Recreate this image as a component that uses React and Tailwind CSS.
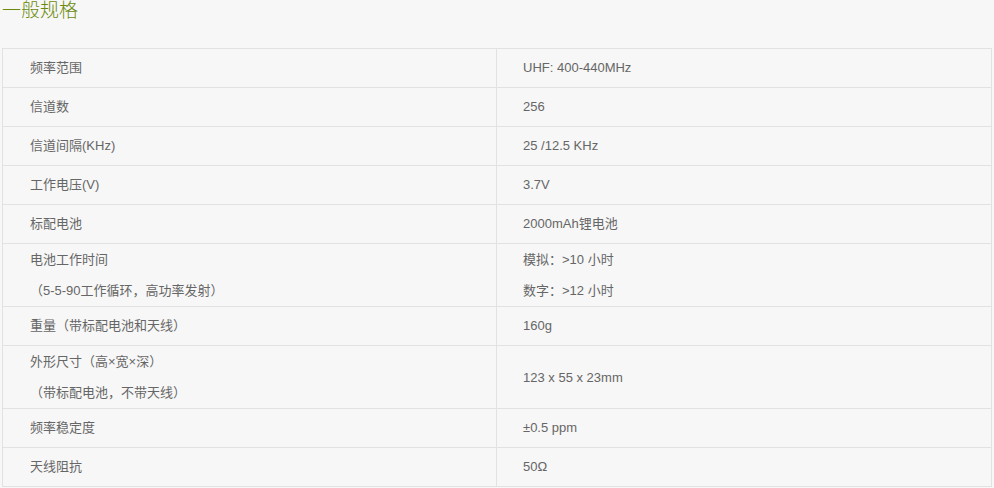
const specs = [
  { label: ['频率范围'], value: ['UHF: 400-440MHz'] },
  { label: ['信道数'], value: ['256'] },
  { label: ['信道间隔(KHz)'], value: ['25 /12.5 KHz'] },
  { label: ['工作电压(V)'], value: ['3.7V'] },
  { label: ['标配电池'], value: ['2000mAh锂电池'] },
  { label: ['电池工作时间', '（5-5-90工作循环，高功率发射）'], value: ['模拟：>10 小时', '数字：>12 小时'] },
  { label: ['重量（带标配电池和天线）'], value: ['160g'] },
  { label: ['外形尺寸（高×宽×深）', '（带标配电池，不带天线）'], value: ['123 x 55 x 23mm'] },
  { label: ['频率稳定度'], value: ['±0.5 ppm'] },
  { label: ['天线阻抗'], value: ['50Ω'] },
];

const Cell = ({ lines, tall, className = '' }) => (
  <div className={`flex flex-col justify-center ${tall ? 'min-h-[62px]' : 'min-h-[38px] pb-[1px]'} ${className}`}>
    {lines.map((line, i) => (
      <p key={i} className="leading-[31px]">
        {line}
      </p>
    ))}
  </div>
);

export default function App() {
  return (
    <div
      className="h-[488px] w-[994px] overflow-hidden bg-[#f7f7f7] text-[13px] text-[#666]"
      style={{ fontFamily: '"Liberation Sans", Arial, "Noto Sans CJK SC", sans-serif' }}
    >
      <h2 className="ml-[2px] h-[48px] text-[19px] font-light leading-[22px] text-[#6b8a0c]">
        一般规格
      </h2>

      {/* 规格表 */}
      <div className="ml-[2px] w-[990px] border-x border-t border-[#e2e2e2]">
        {specs.map((row, i) => {
          const tall = row.label.length > 1 || row.value.length > 1;
          return (
            <div key={i} className="flex border-b border-[#e2e2e2]">
              <Cell lines={row.label} tall={tall} className="w-[494px] border-r border-[#e2e2e2] pl-[27px]" />
              <Cell lines={row.value} tall={tall} className="flex-1 pl-[26px]" />
            </div>
          );
        })}
      </div>
    </div>
  );
}
